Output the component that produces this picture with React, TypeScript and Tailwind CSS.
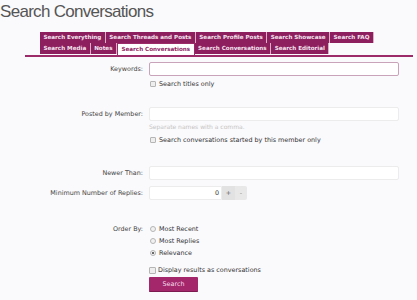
import React from "react";

const tabRows = [
  ["Search Everything", "Search Threads and Posts", "Search Profile Posts", "Search Showcase", "Search FAQ"],
  ["Search Media", "Notes", "Search Conversations", "Search Conversations", "Search Editorial"],
];

function Tab({ label, active }: { label: string; active?: boolean }) {
  if (active) {
    return (
      <div className="h-[12px] -mb-px px-[3.5px] flex items-center bg-white text-[#8e1f5f] border-x border-t border-[#9c2b69] relative z-10">
        {label}
      </div>
    );
  }
  return (
    <div className="h-[11px] px-[3.5px] flex items-center bg-[#8e1f5f] text-[#f4e3ee] border-r border-[#d9b0c6]">
      {label}
    </div>
  );
}

function Check({ big }: { big?: boolean }) {
  return (
    <span
      className={
        big
          ? "w-[7px] h-[7px] border border-[#b5b5b5] bg-[#eeeeee] rounded-[1px] shrink-0"
          : "w-[6px] h-[6px] border border-[#b5b5b5] bg-[#eeeeee] rounded-[1px] shrink-0"
      }
    />
  );
}

function Radio({ checked }: { checked?: boolean }) {
  return (
    <span className="w-[6px] h-[6px] rounded-full border border-[#b5b5b5] bg-[#f1f1f1] shrink-0 flex items-center justify-center">
      {checked && <span className="w-[2.5px] h-[2.5px] rounded-full bg-[#3a3a3a]" />}
    </span>
  );
}

function Row({ label, className, children }: { label?: string; className?: string; children: React.ReactNode }) {
  return (
    <div className={`flex ${className ?? ""}`}>
      <div className="w-[143px] shrink-0 text-right text-[#444]">{label}</div>
      <div className="ml-[6px] w-[250px]">{children}</div>
    </div>
  );
}

export default function App() {
  return (
    <div className="w-[417px] h-[300px] bg-[#faf9fb] overflow-hidden" style={{ fontFamily: '"DejaVu Sans", Verdana, sans-serif' }}>
      <h1
        className="pt-[2px] text-[17px] leading-[20px] tracking-[-0.7px] text-[#555555]"
        style={{ fontFamily: '"Liberation Sans", Arial, sans-serif' }}
      >
        Search Conversations
      </h1>

      {/* Tabs */}
      <div className="mt-[10px] ml-[25px] w-[388px]">
        <div className="pl-[15px] text-[5.6px] font-bold leading-none">
          {tabRows.map((row, ri) => (
            <div key={ri} className="flex items-end">
              {row.map((t, i) => (
                <Tab key={i} label={t} active={ri === 1 && i === 2} />
              ))}
            </div>
          ))}
        </div>
        <div className="h-[2.5px] bg-[#9c2b69] mt-[0.5px]" />
      </div>

      {/* Form */}
      <div className="text-[6.4px] leading-[8px]">
        <Row label="Keywords:" className="mt-[5px] items-center">
          <div className="h-[14px] bg-white border border-[#c9a3b9] rounded-[2px]" />
        </Row>
        <Row className="mt-[4px]">
          <label className="flex items-center gap-[3px] pl-[1px]">
            <Check />
            <span className="text-[#333]">Search titles only</span>
          </label>
        </Row>

        <Row label="Posted by Member:" className="mt-[19px] items-center">
          <div className="h-[14px] bg-white border border-[#ececec] rounded-[2px]" />
        </Row>
        <Row className="mt-[2px]">
          <div className="text-[6px] text-[#c4c4c4]">Separate names with a comma.</div>
        </Row>
        <Row className="mt-[5px]">
          <label className="flex items-center gap-[3px] pl-[1px]">
            <Check />
            <span className="text-[#333]">Search conversations started by this member only</span>
          </label>
        </Row>

        <Row label="Newer Than:" className="mt-[22px] items-center">
          <div className="h-[14px] bg-white border border-[#ececec] rounded-[2px]" />
        </Row>
        <Row label="Minimum Number of Replies:" className="mt-[6px] items-center">
          <div className="flex h-[14px]">
            <div className="w-[73px] bg-white border border-[#ececec] rounded-l-[2px] flex items-center justify-end pr-[2px] text-[#333]">
              0
            </div>
            <div className="w-[13px] bg-[#e2e2e2] flex items-center justify-center text-[#666]">+</div>
            <div className="w-[12px] bg-[#e8e8e8] flex items-center justify-center text-[#888] rounded-r-[2px]">-</div>
          </div>
        </Row>

        <Row label="Order By:" className="mt-[25px]">
          <div className="flex flex-col gap-[4px] text-[#333]">
            <label className="flex items-center gap-[3px] pl-[1px]">
              <Radio />
              <span>Most Recent</span>
            </label>
            <label className="flex items-center gap-[3px] pl-[1px]">
              <Radio />
              <span>Most Replies</span>
            </label>
            <label className="flex items-center gap-[3px] pl-[1px]">
              <Radio checked />
              <span>Relevance</span>
            </label>
          </div>
        </Row>
        <Row className="mt-[9px]">
          <label className="flex items-center gap-[2px]">
            <Check big />
            <span className="text-[#333]">Display results as conversations</span>
          </label>
        </Row>
        <Row className="mt-[3px]">
          <button className="w-[49px] h-[15px] bg-[#a3276a] text-[#f6dcea] text-[6.4px] rounded-[1px] border-b border-[#7d1a50]">
            Search
          </button>
        </Row>
      </div>
    </div>
  );
}
